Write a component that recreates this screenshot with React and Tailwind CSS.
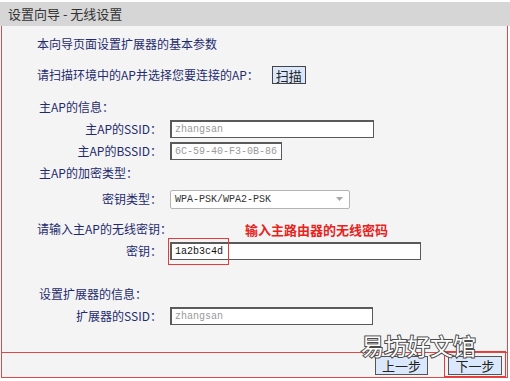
import React from 'react';

const LABEL = 'text-[12px] leading-none text-[#1f2b6e]';
const INPUT = 'h-[18px] bg-white border border-[#5a5a5a] border-t-2 border-l-2 px-[3px] flex items-center overflow-hidden whitespace-nowrap text-[10px] font-["Liberation_Mono",monospace]';

const FieldRow = ({ label, children, className = '' }) => (
  <div className={`h-[22px] flex items-center ${className}`}>
    <div className={`w-[160px] text-right ${LABEL}`}>{label}</div>
    <div className="ml-[8px] flex items-center">{children}</div>
  </div>
);

const SectionRow = ({ children, className = '' }) => (
  <div className={`h-[22px] flex items-center pl-[35px] ${LABEL} ${className}`}>{children}</div>
);

const App = () => {
  return (
    <div className="relative w-[510px] h-[381px] bg-white overflow-hidden font-['Noto_Sans_CJK_SC',sans-serif]">
      {/* Title bar */}
      <div className="mt-[2px] h-[24px] bg-[#d6d6d6] flex items-center pl-[8px] text-[13px] text-[#333] whitespace-pre">
        设置向导 - 无线设置
      </div>

      {/* Main panel */}
      <div className="ml-[1px] w-[507px] h-[326px] bg-[#f4f4f4] border-l border-r border-[#e04848] pt-[7px] flex flex-col">
        <SectionRow>本向导页面设置扩展器的基本参数</SectionRow>

        <SectionRow className="mt-[9px]">
          <span>请扫描环境中的AP并选择您要连接的AP：</span>
          <button className="ml-[13px] h-[18px] px-[3px] bg-[#dbe8fb] border border-[#444] text-[13px] leading-none text-[#222]">
            扫描
          </button>
        </SectionRow>

        <SectionRow className="mt-[10px] pl-[37px]">主AP的信息：</SectionRow>
        <FieldRow label="主AP的SSID：">
          <div className={`w-[204px] text-[#9a9a9a] ${INPUT}`}>zhangsan</div>
        </FieldRow>
        <FieldRow label="主AP的BSSID：">
          <div className={`w-[112px] text-[#9a9a9a] ${INPUT}`}>6C-59-40-F3-0B-86</div>
        </FieldRow>
        <SectionRow className="pl-[37px]">主AP的加密类型：</SectionRow>

        <FieldRow label="密钥类型：" className="mt-[4px]">
          <div className="w-[180px] h-[19px] bg-white border border-[#b4b4b4] rounded-[2px] flex items-center justify-between pl-[4px] pr-[6px] text-[10px] text-[#333] font-['Liberation_Mono',monospace]">
            <span>WPA-PSK/WPA2-PSK</span>
            <svg width="7" height="4" viewBox="0 0 7 4">
              <path d="M0 0 L7 0 L3.5 4 Z" fill="#a8a8a8" />
            </svg>
          </div>
        </FieldRow>

        <SectionRow className="mt-[8px]">请输入主AP的无线密钥：</SectionRow>
        <FieldRow label="密钥：">
          <div className={`w-[251px] text-[#111] ${INPUT}`}>1a2b3c4d</div>
        </FieldRow>

        <SectionRow className="mt-[21px] pl-[37px]">设置扩展器的信息：</SectionRow>
        <FieldRow label="扩展器的SSID：">
          <div className={`w-[203px] text-[#9a9a9a] ${INPUT}`}>zhangsan</div>
        </FieldRow>
      </div>

      {/* Footer */}
      <div className="ml-[1px] w-[507px] h-[26px] bg-[#f4f4f4] border border-[#e04848] flex items-center justify-end gap-[20px] pr-[5px]">
        <button className="w-[53px] h-[19px] bg-[#dbe8fb] border border-[#555] text-[13px] leading-none text-[#222]">
          上一步
        </button>
        <button className="w-[54px] h-[19px] bg-[#dbe8fb] border border-[#555] text-[13px] leading-none text-[#222]">
          下一步
        </button>
      </div>

      {/* Annotations */}
      <div className="absolute left-[245px] top-[223px] text-[13px] leading-none font-bold text-[#e8231c]">
        输入主路由器的无线密码
      </div>
      <div className="absolute left-[168px] top-[238px] w-[61px] h-[27px] border border-[#e83a3a]" />
      <div className="absolute left-[444px] top-[351px] w-[62px] h-[26px] border border-[#e83a3a]" />

      {/* Watermark */}
      <div className="absolute left-[361px] top-[334px] text-[23px] leading-none text-white [-webkit-text-stroke:2px_#4a4a4a] [paint-order:stroke_fill]">
        易坊好文馆
      </div>
    </div>
  );
};

export default App;
